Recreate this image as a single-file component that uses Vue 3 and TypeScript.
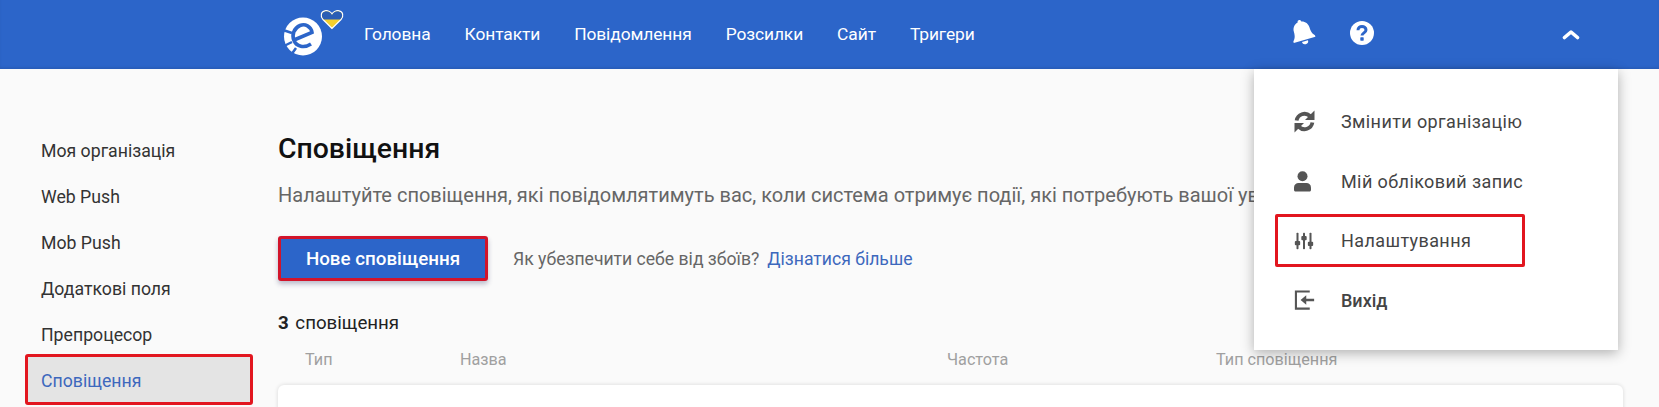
<script setup lang="ts">
const navItems = ['Головна', 'Контакти', 'Повідомлення', 'Розсилки', 'Сайт', 'Тригери']
const sideItems = ['Моя організація', 'Web Push', 'Mob Push', 'Додаткові поля', 'Препроцесор', 'Сповіщення']
</script>

<template>
  <div class="page">
    <header class="topbar">
      <svg class="logo" width="64" height="50" viewBox="0 0 64 50">
        <defs>
          <clipPath id="heart-top"><rect x="38" y="0" width="26" height="10.500" /></clipPath>
        </defs>
        <circle cx="22" cy="27.500" r="19" fill="#fff" />
        <path fill="none" stroke="#2c65c9" stroke-width="3.600" d="M13 31 31 23.500C30 17 24 14.500 19 16.500 13 19 10.500 26 13 31.500 15.500 37.500 23 39.500 30 35" />
        <path fill="none" stroke="#2c65c9" stroke-width="2.500" d="M2 21 11 24M3 37 11 33M10 46 15 39" />
        <path fill="#f4cf2e" stroke="#fff" stroke-width="1.200" d="M51 19.500 42 10.500C39 7 40 2.500 44 1.800 47 1.300 50 3 51 5 52 3 55 1.300 58 1.800 62 2.500 63 7 60 10.500z" />
        <path fill="#2a5db5" clip-path="url(#heart-top)" d="M51 18.900 42.400 10.100C39.800 7 40.700 3 44.200 2.400 47 2 50 3.500 51 6 52 3.500 55 2 57.800 2.400 61.300 3 62.200 7 59.600 10.100z" />
      </svg>
      <nav class="nav">
        <a v-for="item in navItems" :key="item">{{ item }}</a>
      </nav>
      <div class="top-icons">
        <svg class="bell" width="27" height="27" viewBox="0 0 24 24">
          <g transform="rotate(-16 12 12)">
            <path fill="#fff" d="M12 .5a1.700 1.700 0 0 1 1.700 1.800c3.400.8 5.500 3.600 5.500 7 0 5.400 1.500 6.700 2.800 8.100v1.400H2v-1.400c1.300-1.400 2.800-2.700 2.800-8.100 0-3.400 2.100-6.200 5.500-7A1.700 1.700 0 0 1 12 .5z" />
            <path fill="#fff" d="M9.200 20h5.600a2.800 2.800 0 0 1-5.600 0z" />
          </g>
        </svg>
        <svg class="help" width="24" height="24" viewBox="0 0 24 24">
          <circle cx="12" cy="12" r="12" fill="#fff" />
          <path fill="none" stroke="#2c65c9" stroke-width="3" d="M8 9.200c0-2.400 1.800-3.700 4-3.700s4 1.300 4 3.400c0 3-4 2.900-4 5.700" />
          <rect x="10.300" y="16.300" width="3.400" height="3.400" rx=".6" fill="#2c65c9" />
        </svg>
        <svg class="caret" width="18" height="11" viewBox="0 0 18 11">
          <path fill="none" stroke="#fff" stroke-width="3.600" stroke-linecap="round" stroke-linejoin="round" d="M2.500 8.500 9 3l6.500 5.500" />
        </svg>
      </div>
    </header>

    <div class="body">
      <aside class="side">
        <a v-for="item in sideItems" :key="item" :class="['side-item', { active: item === 'Сповіщення' }]">{{ item }}</a>
      </aside>

      <main class="content">
        <h1>Сповіщення</h1>
        <p class="desc">Налаштуйте сповіщення, які повідомлятимуть вас, коли система отримує події, які потребують вашої уваги.</p>
        <div class="action-row">
          <button type="button" class="new-btn">Нове сповіщення</button>
          <span class="hint">Як убезпечити себе від збоїв?</span>
          <a class="more">Дізнатися більше</a>
        </div>
        <div class="count"><b>3</b> сповіщення</div>
        <div class="table-head">
          <span class="col-type">Тип</span>
          <span class="col-name">Назва</span>
          <span class="col-freq">Частота</span>
          <span>Тип сповіщення</span>
        </div>
        <div class="card"></div>
      </main>
    </div>

    <div class="menu">
      <a class="menu-item">
        <span class="menu-icon">
          <svg width="21" height="25" viewBox="0 0 21 25">
            <g>
              <path fill="none" stroke="#555" stroke-width="3.800" d="M2.600 11.500A8 8 0 0 1 16 7" />
              <path fill="#555" d="M20.500 1.500V11H11z" />
            </g>
            <g transform="rotate(180 10.500 12.500)">
              <path fill="none" stroke="#555" stroke-width="3.800" d="M2.600 11.500A8 8 0 0 1 16 7" />
              <path fill="#555" d="M20.500 1.500V11H11z" />
            </g>
          </svg>
        </span>
        <span>Змінити організацію</span>
      </a>
      <a class="menu-item">
        <span class="menu-icon">
          <svg width="17" height="21" viewBox="0 0 17 21">
            <circle cx="8.500" cy="5.200" r="5" fill="#555" />
            <path fill="#555" d="M1.500 20.500c-.8 0-1.500-.7-1.500-1.500v-2.500c0-2.800 2.200-4.500 4.500-4.500h8c2.300 0 4.500 1.700 4.500 4.500V19c0 .8-.7 1.500-1.500 1.500z" />
          </svg>
        </span>
        <span>Мій обліковий запис</span>
      </a>
      <a class="menu-item marked">
        <span class="menu-icon">
          <svg width="20" height="20" viewBox="0 0 24 24">
            <g fill="#555">
              <rect x="3" y="2" width="2.400" height="20" rx="1" />
              <rect x="10.800" y="2" width="2.400" height="20" rx="1" />
              <rect x="18.600" y="2" width="2.400" height="20" rx="1" />
              <rect x="1" y="12" width="6.400" height="5" rx="1.200" />
              <rect x="8.800" y="6" width="6.400" height="5" rx="1.200" />
              <rect x="16.600" y="13" width="6.400" height="5" rx="1.200" />
            </g>
          </svg>
        </span>
        <span>Налаштування</span>
      </a>
      <a class="menu-item logout">
        <span class="menu-icon">
          <svg width="21" height="22" viewBox="0 0 24 24">
            <path fill="none" stroke="#555" stroke-width="2.400" d="M18 2.200H2.200v19.600H18" />
            <path fill="#555" d="M23 10.500h-9V6.500L7.500 12l6.500 5.500v-4h9z" />
          </svg>
        </span>
        <span>Вихід</span>
      </a>
    </div>
  </div>
</template>

<style scoped>
.page {
  position: relative;
  height: 407px;
  overflow: hidden;
  background: #fafafa;
  font-family: Roboto, "Noto Sans", sans-serif;
  color: #333;
}

.topbar {
  display: flex;
  align-items: center;
  height: 69px;
  padding: 0 79px 0 281px;
  background: #2c65c9;
  box-shadow: inset 0 -2px 2px rgba(0, 0, 0, 0.08);
}

.logo {
  flex: none;
  margin-top: -1px;
  margin-right: 19px;
}

.nav {
  display: flex;
  gap: 34px;
  margin-top: -2px;
}

.nav a {
  color: #fff;
  font-size: 17.4px;
  letter-spacing: -0.1px;
}

.top-icons {
  display: flex;
  align-items: center;
  margin-left: auto;
}

.bell {
  margin-top: -5px;
  margin-right: 34px;
}

.help {
  margin-top: -3px;
}

.caret {
  margin-left: 188px;
}

.body {
  display: flex;
}

.side {
  display: flex;
  flex-direction: column;
  flex: none;
  width: 228px;
  margin-left: 25px;
  padding-top: 59px;
}

.side-item {
  display: flex;
  align-items: center;
  height: 46px;
  padding-left: 16px;
  font-size: 17.7px;
  color: #333;
}

.side-item.active {
  height: 51px;
  box-sizing: border-box;
  color: #3d68bd;
  background: #e4e4e4;
  border: 3px solid #e2161f;
  border-radius: 3px;
  padding: 3px 0 0 13px;
  margin-top: -4px;
}

.content {
  flex: 1;
  min-width: 0;
  margin-left: 25px;
  margin-right: 36px;
  padding-top: 64px;
}

h1 {
  margin: 0;
  font-size: 28.4px;
  font-weight: 500;
  line-height: 32px;
  color: #111;
}

.desc {
  margin: 15px 0 0;
  font-size: 20px;
  line-height: 30px;
  white-space: nowrap;
  color: #666;
}

.action-row {
  display: flex;
  align-items: center;
  margin-top: 26px;
  font-size: 17.6px;
}

.new-btn {
  width: 210px;
  height: 45px;
  background: #2c65c9;
  border: 3px solid #d2142a;
  border-radius: 3px;
  color: #fff;
  font: 500 18.8px Roboto, sans-serif;
  box-shadow: 0 3px 5px rgba(40, 40, 90, 0.3);
}

.hint {
  margin-left: 25px;
  color: #666;
}

.more {
  margin-left: 8px;
  color: #3d68bd;
}

.count {
  margin-top: 32px;
  font-size: 18.7px;
  line-height: 20px;
  color: #222;
}

.count b {
  font-weight: 700;
  margin-right: 2px;
}

.table-head {
  display: flex;
  margin-top: 18px;
  padding-left: 27px;
  font-size: 16.2px;
  line-height: 18px;
  color: #a0a0a0;
}

.col-type {
  width: 155px;
}

.col-name {
  width: 487px;
}

.col-freq {
  width: 269px;
}

.card {
  height: 60px;
  margin-top: 16px;
  background: #fff;
  border-radius: 6px 6px 0 0;
  box-shadow: 0 0 4px rgba(0, 0, 0, 0.14);
}

.menu {
  position: absolute;
  top: 69px;
  left: 1254px;
  width: 364px;
  height: 281px;
  padding-top: 22px;
  box-sizing: border-box;
  background: #fff;
  box-shadow: 0 3px 12px rgba(0, 0, 0, 0.3);
}

.menu-item {
  display: flex;
  align-items: center;
  gap: 25px;
  width: 250px;
  height: 60px;
  margin-left: 21px;
  padding-left: 19px;
  box-sizing: border-box;
  font-size: 18px;
  letter-spacing: 0.4px;
  color: #444;
}

.menu-icon {
  display: flex;
  flex: none;
  width: 22px;
}

.menu-item.marked {
  height: 53px;
  margin: 3px 0 3px 21px;
  padding-left: 16px;
  border: 3px solid #e2161f;
  border-radius: 2px;
}

.logout span {
  font-weight: 500;
  letter-spacing: 0;
}
</style>

<style>
html,
body {
  margin: 0;
  background: #fafafa;
}
</style>
